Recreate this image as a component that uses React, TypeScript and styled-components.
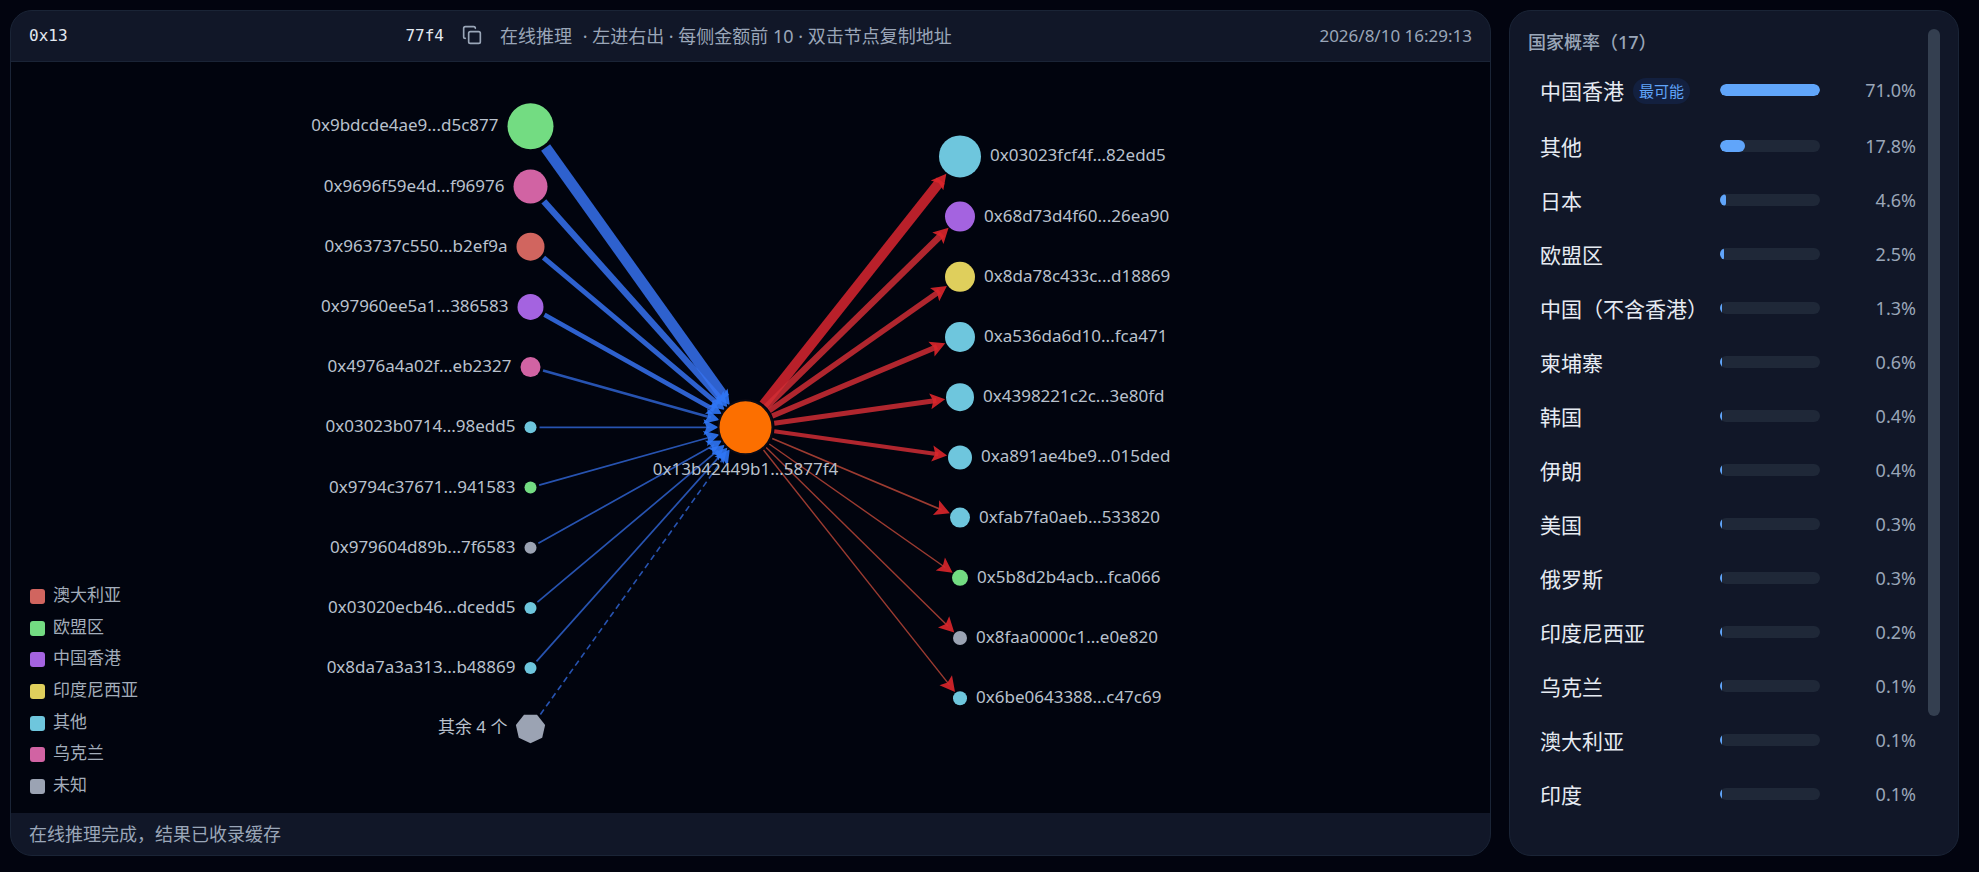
import React from "react";
import styled, { createGlobalStyle } from "styled-components";
import { Copy } from "lucide-react";

const GlobalStyle = createGlobalStyle`
  *, *::before, *::after { box-sizing: border-box; }
  body {
    margin: 0;
    background: #02040f;
    color: #e2e8f0;
    font-family: "Noto Sans", "Noto Sans CJK SC", sans-serif;
  }
`;

const color = {
  panel: "#111728",
  canvas: "#01040e",
  border: "#1a2436",
  muted: "#9aa6b8",
  label: "#b9c1cd",
  accent: "#60a5fa",
  track: "#1f2838",
};

const tone = {
  au: "#d1655f",
  eu: "#73dc82",
  hk: "#a463e0",
  id: "#dfcf5c",
  other: "#6ec6dd",
  ua: "#d163a3",
  unknown: "#9ba3b3",
};

/* ---------- data ---------- */

type GraphNode = { label: string; r: number; fill: string; width: number; dashed?: boolean };

const incoming: GraphNode[] = [
  { label: "0x9bdcde4ae9...d5c877", r: 23, fill: tone.eu, width: 11 },
  { label: "0x9696f59e4d...f96976", r: 17, fill: tone.ua, width: 6.5 },
  { label: "0x963737c550...b2ef9a", r: 14, fill: tone.au, width: 5 },
  { label: "0x97960ee5a1...386583", r: 13, fill: tone.hk, width: 4.5 },
  { label: "0x4976a4a02f...eb2327", r: 10, fill: tone.ua, width: 2.6 },
  { label: "0x03023b0714...98edd5", r: 6, fill: tone.other, width: 1.7 },
  { label: "0x9794c37671...941583", r: 6, fill: tone.eu, width: 1.7 },
  { label: "0x979604d89b...7f6583", r: 6, fill: tone.unknown, width: 1.7 },
  { label: "0x03020ecb46...dcedd5", r: 6, fill: tone.other, width: 1.7 },
  { label: "0x8da7a3a313...b48869", r: 6, fill: tone.other, width: 1.7 },
  { label: "其余 4 个", r: 14, fill: tone.unknown, width: 1.6, dashed: true },
];

const outgoing: GraphNode[] = [
  { label: "0x03023fcf4f...82edd5", r: 21, fill: tone.other, width: 10 },
  { label: "0x68d73d4f60...26ea90", r: 15, fill: tone.hk, width: 6.5 },
  { label: "0x8da78c433c...d18869", r: 15, fill: tone.id, width: 5.5 },
  { label: "0xa536da6d10...fca471", r: 15, fill: tone.other, width: 5.5 },
  { label: "0x4398221c2c...3e80fd", r: 14, fill: tone.other, width: 5 },
  { label: "0xa891ae4be9...015ded", r: 12, fill: tone.other, width: 4 },
  { label: "0xfab7fa0aeb...533820", r: 10, fill: tone.other, width: 1.7 },
  { label: "0x5b8d2b4acb...fca066", r: 8, fill: tone.eu, width: 1.4 },
  { label: "0x8faa0000c1...e0e820", r: 7, fill: tone.unknown, width: 1.4 },
  { label: "0x6be0643388...c47c69", r: 7, fill: tone.other, width: 1.4 },
];

const legend = [
  { name: "澳大利亚", fill: tone.au },
  { name: "欧盟区", fill: tone.eu },
  { name: "中国香港", fill: tone.hk },
  { name: "印度尼西亚", fill: tone.id },
  { name: "其他", fill: tone.other },
  { name: "乌克兰", fill: tone.ua },
  { name: "未知", fill: tone.unknown },
];

const countries = [
  { name: "中国香港", value: 71.0 },
  { name: "其他", value: 17.8 },
  { name: "日本", value: 4.6 },
  { name: "欧盟区", value: 2.5 },
  { name: "中国（不含香港）", value: 1.3 },
  { name: "柬埔寨", value: 0.6 },
  { name: "韩国", value: 0.4 },
  { name: "伊朗", value: 0.4 },
  { name: "美国", value: 0.3 },
  { name: "俄罗斯", value: 0.3 },
  { name: "印度尼西亚", value: 0.2 },
  { name: "乌克兰", value: 0.1 },
  { name: "澳大利亚", value: 0.1 },
  { name: "印度", value: 0.1 },
];

/* ---------- page ---------- */

const Page = styled.div`
  min-height: 100vh;
  display: grid;
  grid-template-columns: minmax(0, 1fr) 450px;
  gap: 18px;
  padding: 10px 20px 16px 10px;
`;

const Panel = styled.section`
  display: flex;
  flex-direction: column;
  min-width: 0;
  overflow: hidden;
  background: ${color.panel};
  border: 1px solid ${color.border};
  border-radius: 22px;
`;

const Header = styled.header`
  display: flex;
  align-items: center;
  height: 51px;
  flex: none;
  padding: 0 18px 2px;
  border-bottom: 1px solid ${color.border};
  font-size: 18px;
  color: ${color.muted};
`;

const Address = styled.code`
  display: flex;
  justify-content: space-between;
  width: 415px;
  font: 500 16px "DejaVu Sans Mono", monospace;
  color: #e2e8f0;
`;

const CopyButton = styled.button`
  display: flex;
  margin: 0 18px;
  padding: 0;
  border: 0;
  background: none;
  color: ${color.muted};
  cursor: pointer;
`;

const Info = styled.p`
  display: flex;
  gap: 6px;
  margin: 0;
  white-space: nowrap;
`;

const Time = styled.time`
  margin-left: auto;
  font-size: 17px;
  white-space: nowrap;
`;

const Canvas = styled.div`
  position: relative;
  flex: 1;
  display: flex;
  background: ${color.canvas};
`;

const GraphSvg = styled.svg`
  display: block;
  width: 100%;
  height: auto;
  min-height: 0;
`;

const NodeLabel = styled.text`
  font-size: 17px;
  fill: ${color.label};
`;

const Legend = styled.ul`
  position: absolute;
  left: 19px;
  bottom: 16px;
  display: flex;
  flex-direction: column;
  justify-content: space-between;
  height: 214px;
  margin: 0;
  padding: 0;
  list-style: none;
`;

const LegendItem = styled.li<{ $fill: string }>`
  display: flex;
  align-items: center;
  gap: 8px;
  font-size: 17px;
  line-height: 24px;
  color: #a3adba;

  &::before {
    content: "";
    width: 15px;
    height: 15px;
    margin-top: 3px;
    border-radius: 3px;
    background: ${(p) => p.$fill};
  }
`;

const Footer = styled.footer`
  flex: none;
  height: 42px;
  padding: 0 18px;
  font-size: 18px;
  line-height: 42px;
  color: ${color.muted};
`;

/* ---------- probability panel ---------- */

const SideBody = styled.div`
  display: flex;
  flex: 1;
  margin: 18px;
`;

const SideContent = styled.div`
  flex: 1;
  min-width: 0;
`;

const Scrollbar = styled.div`
  flex: none;
  width: 12px;
`;

const Thumb = styled.div`
  height: 85%;
  border-radius: 6px;
  background: #343f50;
`;

const Title = styled.h2`
  margin: 0 0 6px;
  font-size: 18px;
  line-height: 26px;
  font-weight: 500;
  color: ${color.muted};
`;

const Table = styled.table`
  width: 100%;
  table-layout: fixed;
  border-collapse: collapse;
`;

const Row = styled.tr<{ $top: boolean }>`
  height: ${(p) => (p.$top ? 58 : 54)}px;
`;

const NameCell = styled.th`
  width: 180px;
  padding: 2px 0 0 12px;
  font-size: 21px;
  line-height: 28px;
  font-weight: 400;
  text-align: left;
  white-space: nowrap;
  color: #e6ebf2;
`;

const NameLine = styled.span`
  display: flex;
  align-items: center;
  gap: 9px;
`;

const Badge = styled.span`
  padding: 0 6px;
  border-radius: 13px;
  background: #13203f;
  color: ${color.accent};
  font-size: 15px;
  line-height: 26px;
`;

const BarCell = styled.td`
  width: 124px;
  padding: 0 12px;
`;

const Track = styled.div`
  height: 12px;
  border-radius: 6px;
  overflow: hidden;
  background: ${color.track};
`;

const Fill = styled.div`
  height: 100%;
  min-width: 2px;
  border-radius: 6px;
  background: ${color.accent};
`;

const ValueCell = styled.td`
  padding: 0 12px 0 0;
  font-size: 18px;
  text-align: right;
  color: ${color.muted};
`;

/* ---------- graph ---------- */

const VIEW = { w: 1479, h: 751 };
const CENTER = { x: 734.5, y: 365.3, r: 26 };
const LEFT_X = 519.5;
const RIGHT_X = 949;
const STEP = 60.2;

const rowY = (index: number, count: number) => CENTER.y + (index - (count - 1) / 2) * STEP;

type EdgeProps = {
  from: { x: number; y: number; r: number };
  to: { x: number; y: number; r: number };
  stroke: string;
  head: string;
  width: number;
  opacity: number;
  dashed?: boolean;
};

function Edge({ from, to, stroke, head, width, opacity, dashed }: EdgeProps) {
  const angle = Math.atan2(to.y - from.y, to.x - from.x);
  const cos = Math.cos(angle);
  const sin = Math.sin(angle);
  const start = from.r + 3;
  const end = to.r + 1;
  const tip = { x: to.x - cos * end, y: to.y - sin * end };
  return (
    <g>
      <line
        x1={from.x + cos * start}
        y1={from.y + sin * start}
        x2={tip.x - cos * 9}
        y2={tip.y - sin * 9}
        stroke={stroke}
        strokeWidth={width}
        strokeOpacity={opacity}
        strokeDasharray={dashed ? "6 4" : undefined}
      />
      <path
        d="M0 0 L-15 8 L-12 0 L-15 -8 Z"
        fill={head}
        fillOpacity={0.9}
        transform={`translate(${tip.x} ${tip.y}) rotate(${(angle * 180) / Math.PI})`}
      />
    </g>
  );
}

function heptagon(cx: number, cy: number, r: number) {
  return Array.from({ length: 7 }, (_, i) => {
    const a = Math.PI / 2 + (i * 2 * Math.PI) / 7;
    return `${cx + r * Math.cos(a)},${cy + r * Math.sin(a)}`;
  }).join(" ");
}

function Graph() {
  return (
    <GraphSvg viewBox={`0 0 ${VIEW.w} ${VIEW.h}`} role="img" aria-label="在线推理">
      {incoming.map((n, i) => (
        <Edge
          key={n.label}
          from={{ x: LEFT_X, y: rowY(i, incoming.length), r: n.r }}
          to={CENTER}
          stroke="#3672f0"
          head="#2f76f5"
          width={n.width}
          opacity={n.width > 3 ? 0.85 : 0.72}
          dashed={n.dashed}
        />
      ))}
      {outgoing.map((n, i) => (
        <Edge
          key={n.label}
          from={CENTER}
          to={{ x: RIGHT_X, y: rowY(i, outgoing.length), r: n.r }}
          stroke={n.width > 8 ? "#dc2630" : n.width > 2 ? "#d22d34" : "#d8503f"}
          head="#dc262b"
          width={n.width}
          opacity={n.width > 2 ? 0.84 : 0.72}
        />
      ))}
      {incoming.map((n, i) => {
        const y = rowY(i, incoming.length);
        return (
          <g key={n.label}>
            {n.dashed ? (
              <polygon points={heptagon(LEFT_X, y, 15)} fill={n.fill} />
            ) : (
              <circle cx={LEFT_X} cy={y} r={n.r} fill={n.fill} />
            )}
            <NodeLabel x={LEFT_X - n.r - 9} y={Math.round(y + 5)} textAnchor="end">
              {n.label}
            </NodeLabel>
          </g>
        );
      })}
      {outgoing.map((n, i) => {
        const y = rowY(i, outgoing.length);
        return (
          <g key={n.label}>
            <circle cx={RIGHT_X} cy={y} r={n.r} fill={n.fill} />
            <NodeLabel x={RIGHT_X + n.r + 9} y={Math.round(y + 5)}>
              {n.label}
            </NodeLabel>
          </g>
        );
      })}
      <circle cx={CENTER.x} cy={CENTER.y} r={CENTER.r + 1} fill="#fc6f00" stroke="#0b0a14" strokeWidth={2} />
      <NodeLabel x={CENTER.x} y={413} textAnchor="middle">
        0x13b42449b1...5877f4
      </NodeLabel>
    </GraphSvg>
  );
}

export default function App() {
  const max = countries[0].value;
  return (
    <>
      <GlobalStyle />
      <Page>
        <Panel>
          <Header>
            <Address>
              <span>0x13</span>
              <span>77f4</span>
            </Address>
            <CopyButton type="button" aria-label="复制地址">
              <Copy size={20} strokeWidth={2} />
            </CopyButton>
            <Info>
              <span>在线推理</span>
              <span>&nbsp;· 左进右出 · 每侧金额前 10 · 双击节点复制地址</span>
            </Info>
            <Time>2026/8/10 16:29:13</Time>
          </Header>
          <Canvas>
            <Graph />
            <Legend>
              {legend.map((l) => (
                <LegendItem key={l.name} $fill={l.fill}>
                  {l.name}
                </LegendItem>
              ))}
            </Legend>
          </Canvas>
          <Footer>在线推理完成，结果已收录缓存</Footer>
        </Panel>

        <Panel as="aside">
          <SideBody>
            <SideContent>
              <Title>国家概率（17）</Title>
              <Table>
                <tbody>
                  {countries.map((c, i) => (
                    <Row key={c.name} $top={i === 0}>
                      <NameCell scope="row">
                        <NameLine>
                          {c.name}
                          {i === 0 && <Badge>最可能</Badge>}
                        </NameLine>
                      </NameCell>
                      <BarCell>
                        <Track>
                          <Fill style={{ width: `${(c.value / max) * 100}%` }} />
                        </Track>
                      </BarCell>
                      <ValueCell>{c.value.toFixed(1)}%</ValueCell>
                    </Row>
                  ))}
                </tbody>
              </Table>
            </SideContent>
            <Scrollbar aria-hidden="true">
              <Thumb />
            </Scrollbar>
          </SideBody>
        </Panel>
      </Page>
    </>
  );
}
